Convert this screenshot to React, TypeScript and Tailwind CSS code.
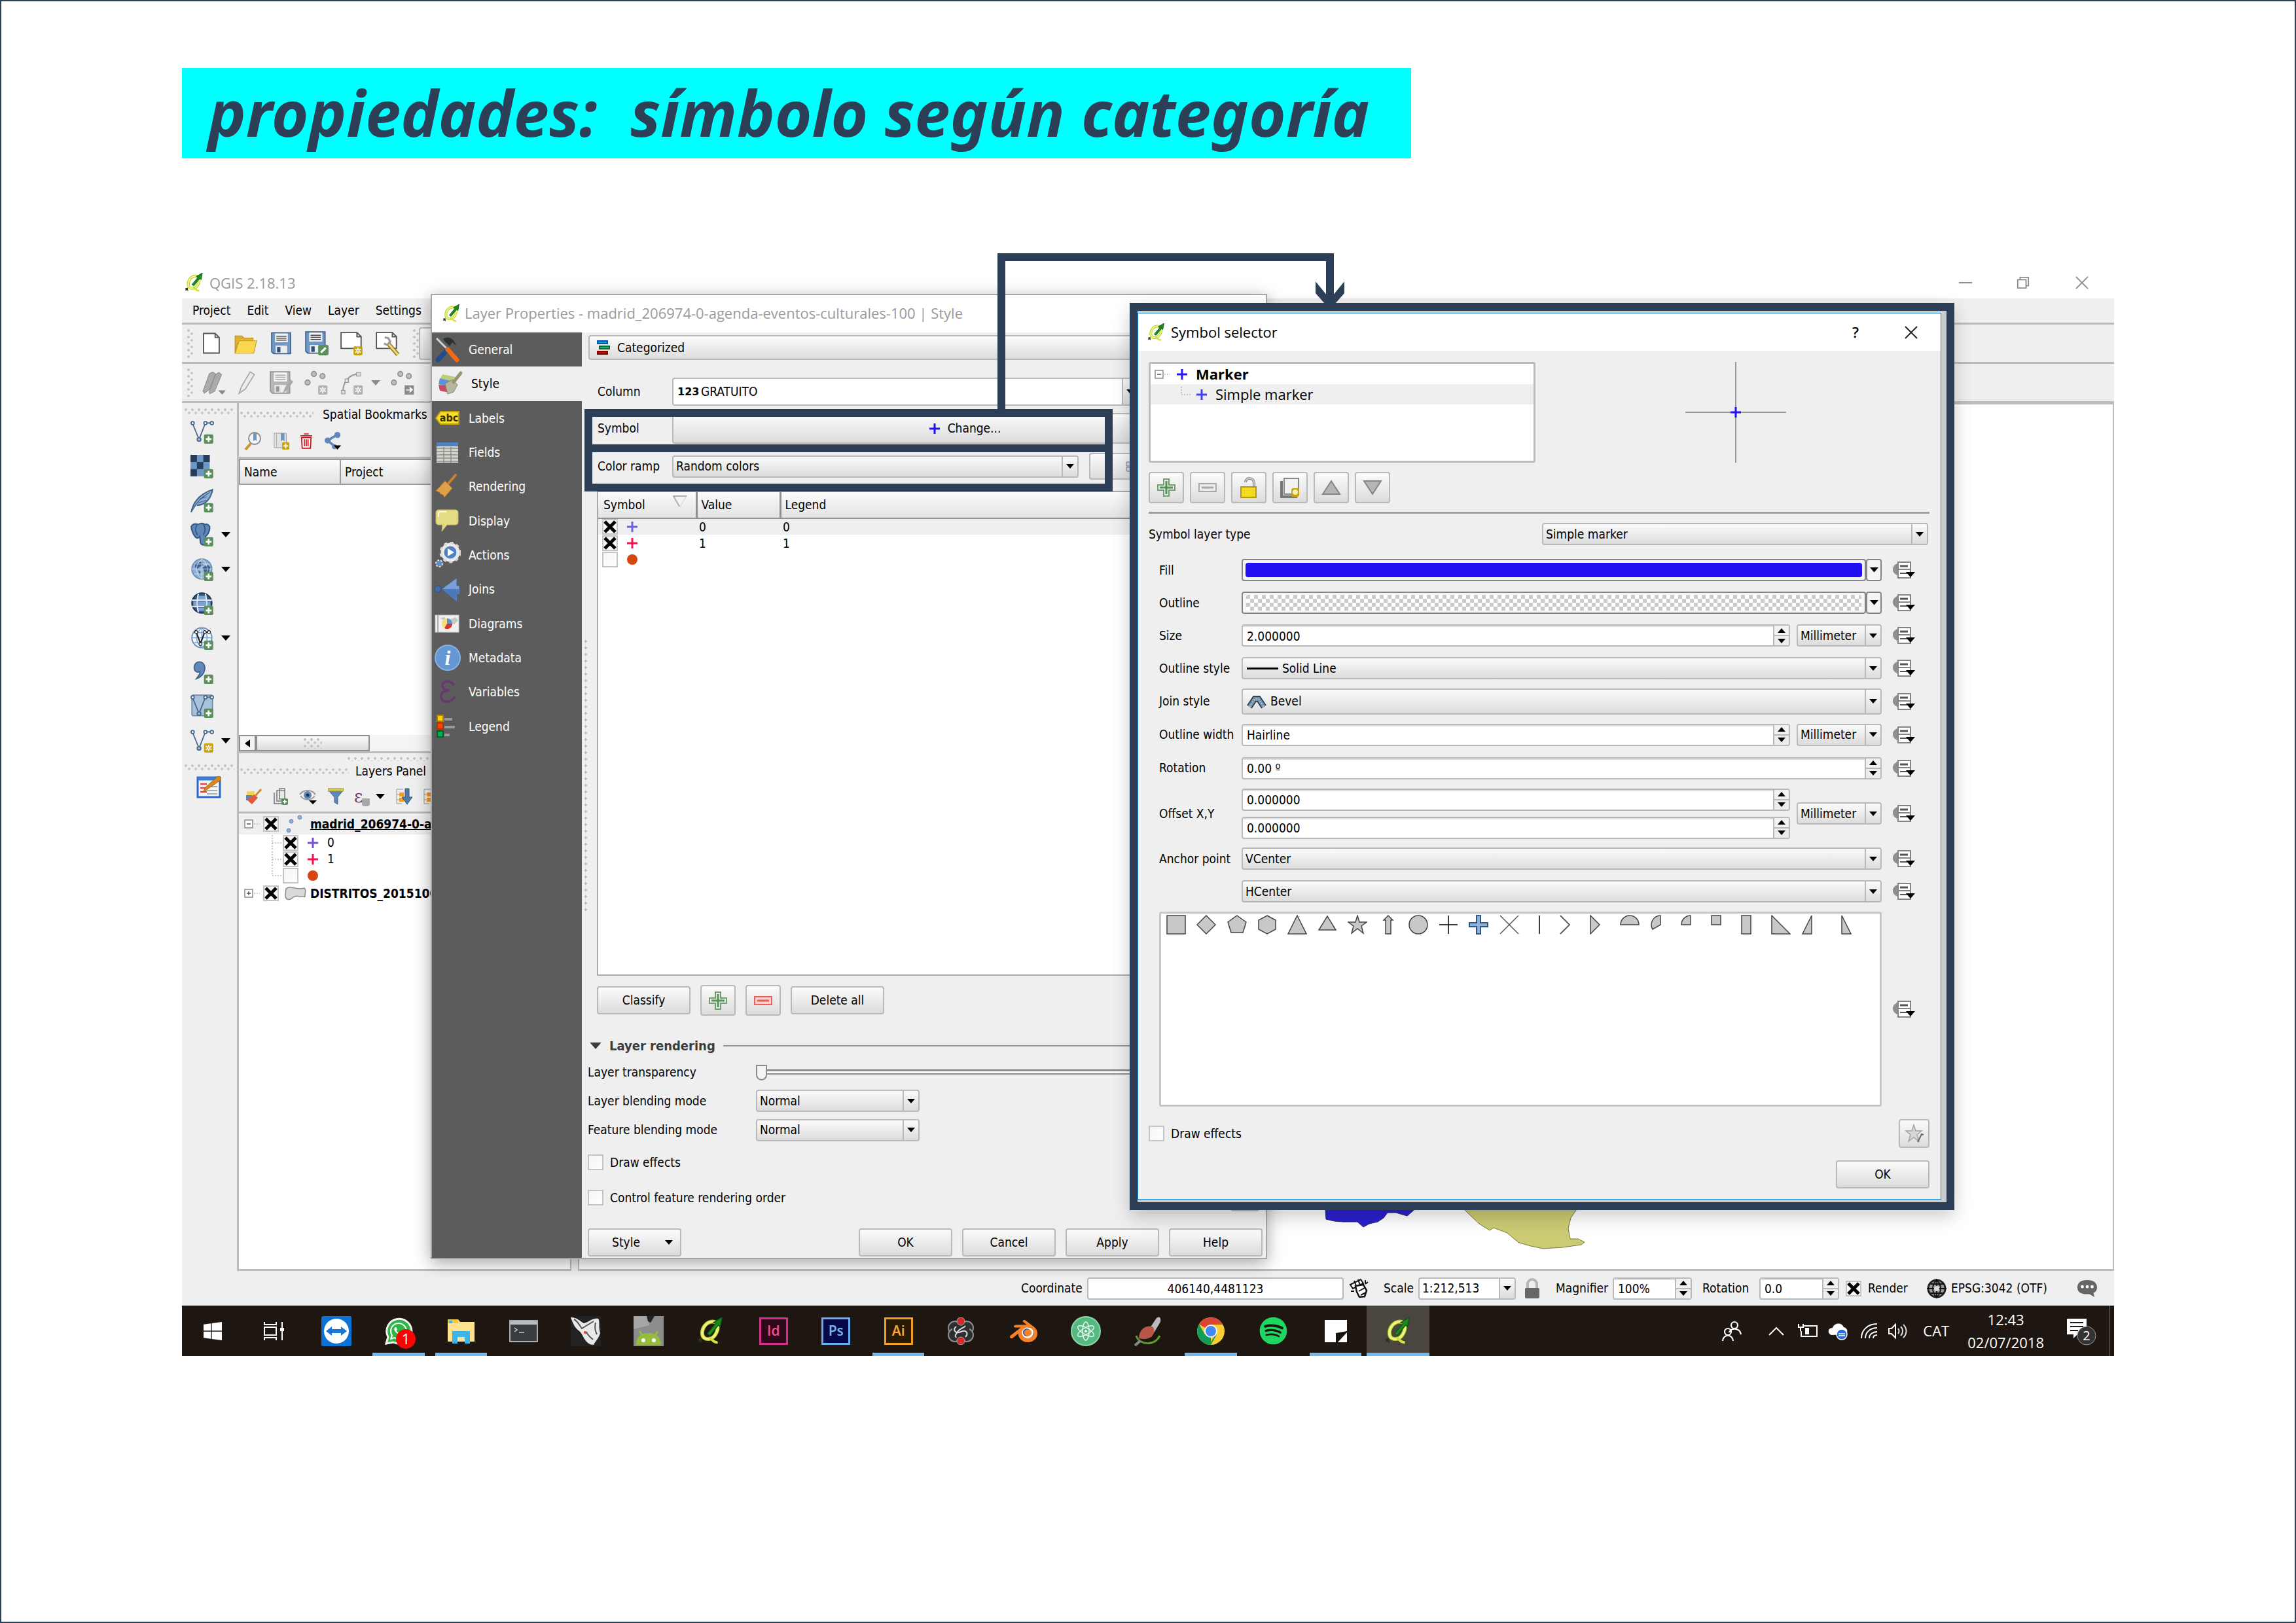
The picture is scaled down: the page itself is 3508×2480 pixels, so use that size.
import React from "react";
import { FaWhatsapp, FaSpotify, FaWindows } from "react-icons/fa";
import { SiBlender } from "react-icons/si";

type Kids = { children?: React.ReactNode; className?: string };

/* ---------- drawing helpers ---------- */

function Svg({ w, h, vb, children, className = "" }: Kids & { w: number; h: number; vb: string }) {
  return (
    <svg width={w} height={h} viewBox={vb} fill="none" className={`shrink-0 ${className}`} aria-hidden="true">
      {children}
    </svg>
  );
}

function QLogo({ size = 30 }: { size?: number }) {
  return (
    <Svg w={size} h={size} vb="0 0 32 32">
      <path d="M18 5C11 5 6 12 6 18s4 8 9 7 9-8 9-13-2-7-6-7Z" stroke="#b5c428" strokeWidth="4.500" />
      <path d="M18 5C11 5 6 12 6 18s4 8 9 7 9-8 9-13-2-7-6-7Z" stroke="#eaf57a" strokeWidth="2.800" />
      <path d="M14 24c4 0 4 6 10 5" stroke="#d3e03c" strokeWidth="3" />
      <path d="M12 19 22 7l-3-1 10-6-2 11-2-2-10 12Z" fill="#1c8a1c" stroke="#0c5a12" strokeWidth="1" />
      <path d="M1 25l4-1 1 6-2-2-3 1 1-2Z" fill="#1c3c1c" />
    </Svg>
  );
}

const PlusBadge = () => (
  <g>
    <rect x="19" y="20" width="13" height="13" rx="2" fill="#5a8f5c" />
    <path d="M25.500 22.500v8M21.500 26.500h8" stroke="#fff" strokeWidth="2.500" />
  </g>
);
const StarBadge = ({ c = "#c9a40d" }: { c?: string }) => (
  <g>
    <rect x="19" y="20" width="13" height="13" rx="2" fill={c} />
    <path d="M25.500 22v9M21.500 24l8 5M29.500 24l-8 5" stroke="#fff" strokeWidth="1.600" />
    <circle cx="25.500" cy="26.500" r="2" fill="#fff" />
    <circle cx="25.500" cy="26.500" r="1" fill={c} />
  </g>
);
const VLine = ({ c = "#46658a" }: { c?: string }) => (
  <g stroke={c} strokeWidth="1.600">
    <path d="M3 5 12 27 21 4h8" />
    <circle cx="3" cy="4" r="2.200" fill="#fff" />
    <circle cx="12" cy="27" r="2.600" fill="#9db9d9" />
    <circle cx="21" cy="4" r="2.200" fill="#fff" />
    <circle cx="30" cy="4" r="2.200" fill="#fff" />
  </g>
);

function Caret({ w = 14, color = "#000", up = false }: { w?: number; color?: string; up?: boolean }) {
  return (
    <Svg w={w} h={w / 2 + 1} vb="0 0 14 8">
      <path d={up ? "M0 8h14L7 0Z" : "M0 0h14L7 8Z"} fill={color} />
    </Svg>
  );
}

function Plus({ color, size = 16 }: { color: string; size?: number }) {
  return (
    <Svg w={size} h={size} vb="0 0 16 16">
      <path d="M8 0v16M0 8h16" stroke={color} strokeWidth="3" />
    </Svg>
  );
}
const Dot = () => <span className="size-4 shrink-0 rounded-full bg-[#d4480f]" />;

const Grip = ({ className = "" }: Kids) => (
  <span
    className={`bg-[radial-gradient(circle_at_2px_2px,#c2c2c2_2px,transparent_2px),radial-gradient(circle_at_7px_7px,#c8c8c8_2px,transparent_2px)] bg-[length:10px_10px] ${className}`}
  />
);

/* ---------- controls ---------- */

const gray = "border-2 border-[#b9b9b9] rounded-[4px] bg-linear-to-b from-[#fbfbfb] to-[#dcdcdc]";

function Btn({ children, className = "", label }: Kids & { label?: string }) {
  return (
    <button aria-label={label} className={`${gray} flex shrink-0 items-center justify-center ${className}`}>
      {children}
    </button>
  );
}

function Combo({ value, icon, pad = "pl-1", label, white = false, className = "", id }: { value: string; icon?: React.ReactNode; pad?: string; label: string; white?: boolean; className?: string; id?: string }) {
  return (
    <div className={`relative flex ${className}`}>
      <select
        id={id}
        aria-label={label}
        className={`w-full appearance-none rounded-[4px] border-2 border-[#b9b9b9] ${pad} ${white ? "bg-white" : "bg-linear-to-b from-[#fbfbfb] to-[#dcdcdc]"}`}
      >
        <option>{value}</option>
      </select>
      {icon && <span className="pointer-events-none absolute inset-y-0 left-2 flex items-center">{icon}</span>}
      <span className="pointer-events-none absolute inset-y-[2px] right-[2px] flex w-6 items-center justify-center rounded-r-[3px] border-l-2 border-[#b9b9b9] bg-linear-to-b from-[#fbfbfb] to-[#dcdcdc]">
        <Caret w={12} />
      </span>
    </div>
  );
}

function Spin({ value, label, className = "", id }: { value: string; label: string; className?: string; id?: string }) {
  return (
    <div className={`flex h-[34px] overflow-hidden rounded-[4px] border-2 border-[#b9b9b9] bg-white ${className}`}>
      <input id={id} aria-label={label} defaultValue={value} className="w-full min-w-0 border-t-2 border-[#dedede] pl-[6px] outline-none" />
      <span className="flex w-6 shrink-0 flex-col border-l-2 border-[#b9b9b9]">
        <button aria-label={`${label} up`} className="flex flex-1 items-center justify-center border-b-2 border-[#b9b9b9] bg-[#f2f2f2]">
          <Caret w={12} up />
        </button>
        <button aria-label={`${label} down`} className="flex flex-1 items-center justify-center bg-[#ececec]">
          <Caret w={12} />
        </button>
      </span>
    </div>
  );
}

function Check({ checked = false, label, id }: { checked?: boolean; label?: string; id?: string }) {
  return (
    <span className="relative flex size-6 shrink-0">
      <input
        type="checkbox"
        id={id}
        aria-label={label}
        defaultChecked={checked}
        className="peer size-6 appearance-none border-2 border-[#c4c4c4] bg-linear-to-br from-[#f4f4f4] to-white"
      />
      <svg viewBox="0 0 24 24" className="pointer-events-none absolute inset-0 hidden peer-checked:block" aria-hidden="true">
        <path d="M4 4 20 20M20 4 4 20" stroke="#000" strokeWidth="5" />
      </svg>
    </span>
  );
}

/* ---------- main window ---------- */

const PageShape = <path d="M4 2h17l6 6v23H4Z M21 2v6h6" fill="#fff" stroke="#555" strokeWidth="1.800" />;
const Floppy = ({ g = false }: { g?: boolean }) => (
  <g>
    <path d="M2 1h28v31H5l-3-3Z" fill={g ? "#b5b5b5" : "#6f97c6"} stroke={g ? "#949494" : "#3c5c85"} strokeWidth="1.600" />
    <rect x="7" y="2" width="19" height="13" fill="#f4f4f4" />
    <path d="M9 6h15M9 9h15M9 12h15" stroke={g ? "#aaa" : "#444"} strokeWidth="1.500" />
    <rect x="8" y="20" width="17" height="11" fill="#eee" />
    <rect x="10" y="22" width="5" height="8" fill={g ? "#999" : "#2f4f7a"} />
  </g>
);
const Dots3 = () => (
  <g fill="#bdbdbd" stroke="#8f8f8f" strokeWidth="1.500">
    <circle cx="13" cy="4" r="3.500" />
    <circle cx="25" cy="7" r="3.500" />
    <circle cx="4" cy="16" r="3.500" />
  </g>
);

function MainToolbars() {
  return (
    <>
      <div className="flex h-[60px] items-center border-b-[3px] border-[#bcbcbc] pl-2">
        <Grip className="h-11 w-[9px]" />
        <div className="ml-[14px] flex items-center">
          <Svg w={28} h={36} vb="2 0 27 34">{PageShape}</Svg>
          <Svg w={36} h={36} vb="0 0 34 34" className="ml-5">
            <path d="M2 6h10l3 3h13v8H5L2 31Z" fill="#e0b32f" stroke="#b98e1b" />
            <path d="M8 13h25l-4 18H2Z" fill="#fcd84f" stroke="#c79a1f" />
          </Svg>
          <Svg w={34} h={36} vb="0 0 33 34" className="ml-5"><Floppy /></Svg>
          <Svg w={38} h={38} vb="0 0 36 36" className="ml-[18px]">
            <Floppy />
            <rect x="20" y="20" width="15" height="15" rx="2" fill="#5a8f5c" />
            <path d="m24 31 7-7" stroke="#fff" strokeWidth="3" />
          </Svg>
          <Svg w={38} h={38} vb="0 -1 36 36" className="ml-4">
            <path d="M2 1h23l6 6v17H2Z M25 1v6h6" fill="#fff" stroke="#555" strokeWidth="1.800" />
            <g transform="translate(1 1)"><StarBadge /></g>
          </Svg>
          <Svg w={38} h={38} vb="0 -1 36 36" className="ml-4">
            <path d="M2 1h23l6 6v17H2Z M25 1v6h6" fill="#fff" stroke="#555" strokeWidth="1.800" />
            <path d="M14 8l5 1 3 5-4 5-5-2" stroke="#999" strokeWidth="3" />
            <path d="m20 18 13 15" stroke="#9a7a2a" strokeWidth="6" />
            <path d="m20 18 13 15" stroke="#f0d77a" strokeWidth="3" />
          </Svg>
        </div>
        <Grip className="ml-5 h-11 w-[9px]" />
        <Btn className="h-[50px] w-[60px] border-[#8a8a8a]" label="Pan map" />
      </div>
      <div className="flex h-[60px] items-center border-b-[3px] border-[#bcbcbc] pl-2">
        <Grip className="h-11 w-[9px]" />
        <Svg w={40} h={38} vb="0 0 38 36" className="ml-3">
          <path d="M3 30 12 5l5-3 4 3-8 22-8 6ZM12 31l9-25 5-3 4 3-10 24-7 4Z" fill="#ababab" stroke="#8b8b8b" />
          <path d="M25 29h11l-5 6Z" fill="#888" />
        </Svg>
        <Svg w={28} h={38} vb="0 0 26 36" className="ml-4">
          <path d="M2 33 5 24 18 2l6 4L11 27Z" fill="#ececec" stroke="#a5a5a5" strokeWidth="1.600" />
        </Svg>
        <Svg w={38} h={36} vb="0 0 36 34" className="ml-5">
          <Floppy g />
          <path d="m20 32 3-8 8-12 4 3-8 12Z" fill="#aaa" />
        </Svg>
        <Svg w={38} h={38} vb="0 -1 34 35" className="ml-4"><Dots3 /><StarBadge c="#b3b3b3" /></Svg>
        <Svg w={38} h={38} vb="0 -1 34 35" className="ml-4">
          <path d="M4 30C4 16 12 4 27 4" stroke="#9b9b9b" strokeWidth="2" />
          <g fill="#ddd" stroke="#999"><rect x="2" y="27" width="5" height="5" /><rect x="7" y="11" width="5" height="5" /><rect x="23" y="2" width="6" height="5" /></g>
          <StarBadge c="#b3b3b3" />
        </Svg>
        <span className="ml-[10px]"><Caret color="#8a8a8a" w={14} /></span>
        <Svg w={38} h={38} vb="0 -1 34 35" className="ml-4">
          <Dots3 />
          <rect x="19" y="20" width="13" height="13" fill="#8a8a8a" />
          <path d="M21 26h5v-4l5 4-5 5v-4h-5Z" fill="#fff" />
        </Svg>
      </div>
    </>
  );
}

const Globe = ({ dark = false, light = false }: { dark?: boolean; light?: boolean }) => (
  <g>
    <circle cx="16" cy="16" r="14" fill={light ? "#f4f8fc" : dark ? "#35557d" : "#8db0d8"} stroke={dark ? "#1f3350" : "#6f8fb5"} strokeWidth="1.800" />
    {dark && <path d="M10 6h12v5H10Zm-6 8h6v6H4Zm18 0h6v6h-6Zm-11 0h10v6H11Zm-1 9h12v4H10Z" fill="#7ba2d0" />}
    {!dark && !light && <path d="M7 8l8-2 3 4-5 3-4 3-3-3Zm10 6 7-4 4 4-3 7-4 3-2-6Zm-6 4 3 2-1 5Z" fill="#3d5f8c" />}
    <path d={dark ? "M2 12h28M2 21h28M11 3c-2 8-2 18 0 26M21 3c2 8 2 18 0 26" : "M2 16h28M16 2v28M5 9h22M5 23h22M16 2c-10 8-10 20 0 28M16 2c10 8 10 20 0 28"} stroke={light ? "#7fa3cf" : "#dce8f5"} strokeWidth={light ? 1.4 : dark ? 2 : 0.8} />
  </g>
);

const sideTools: { name: string; arrow?: boolean; art: React.ReactNode }[] = [
  { name: "Add vector layer", art: <><VLine /><PlusBadge /></> },
  { name: "Add raster layer", art: <><path d="M0 0h27v30H0Z" fill="#6f97c6" /><path d="M0 0h9v10H0ZM18 0h9v10h-9ZM9 10h9v10H9ZM0 20h9v10H0Z" fill="#263e5c" /><PlusBadge /></> },
  { name: "Add SpatiaLite layer", art: <><path d="M1 33C3 22 10 8 31 1c-2 12-10 22-22 22" fill="#8fb0d6" stroke="#3d5d88" strokeWidth="1.800" /><path d="M2 31C8 19 15 12 27 5M10 20l12-4M13 14l10-3" stroke="#3d5d88" /><PlusBadge /></> },
  { name: "Add PostGIS layer", arrow: true, art: <><path d="M1 5c3-5 7-4 10-3 3-2 7-2 9 0 4-1 7 1 7 5 0 5-3 10-6 12v11c-3 2-6 1-7-2l-1-9c-2 3-4 3-6 1C4 17 1 10 1 5Z" fill="#5f87b8" stroke="#34547d" strokeWidth="1.800" /><path d="M9 3c-3 5-2 10 1 14M18 2c4 5 3 10 0 15" stroke="#34547d" strokeWidth="1.500" /><PlusBadge /></> },
  { name: "Add WMS layer", arrow: true, art: <><Globe /><PlusBadge /></> },
  { name: "Add WCS layer", art: <><Globe dark /><PlusBadge /></> },
  { name: "Add WFS layer", arrow: true, art: <><Globe light /><path d="M8 8 14 24 20 8h6" stroke="#222" strokeWidth="2" /><g fill="#fff" stroke="#222"><circle cx="8" cy="8" r="2" /><circle cx="14" cy="25" r="2" /><circle cx="20" cy="8" r="2" /><circle cx="26" cy="8" r="2" /></g><PlusBadge /></> },
  { name: "Add delimited text layer", art: <><path d="M12 2c6 0 9 5 8 11-1 7-6 11-12 13 3-4 6-7 5-10-5 2-8-2-8-6s3-8 7-8Z" fill="#5f87b8" stroke="#3b5c86" strokeWidth="1.500" /><PlusBadge /></> },
  { name: "New shapefile layer", art: <><rect x="2" y="1" width="29" height="29" rx="2" fill="#a9c1dc" stroke="#7288a3" strokeWidth="1.600" /><VLine /><PlusBadge /></> },
  { name: "New memory layer", arrow: true, art: <><VLine /><StarBadge /></> },
];

function SideTools() {
  return (
    <div className="flex w-[87px] shrink-0 flex-col border-r-[3px] border-[#bcbcbc] pt-2">
      <Grip className="mx-1 h-[10px]" />
      <div className="flex h-[524px] flex-col">
        {sideTools.map((t) => (
          <div key={t.name} className="flex flex-1 items-center pl-3">
            <button aria-label={t.name}>
              <Svg w={38} h={38} vb="-1 -1 35 35">{t.art}</Svg>
            </button>
            {t.arrow && <span className="ml-[10px]"><Caret w={14} /></span>}
          </div>
        ))}
      </div>
      <Grip className="mx-1 mt-[10px] h-[10px]" />
      <button aria-label="Edit style" className="mt-[6px] ml-[22px] w-fit">
        <Svg w={40} h={36} vb="0 0 40 36">
          <rect x="2" y="4" width="34" height="30" fill="#f5f5f5" stroke="#2c68c4" strokeWidth="3" />
          <path d="M3 6h32" stroke="#3a7ad9" strokeWidth="5" />
          <path d="M6 14h10M6 20h8M6 26h10" stroke="#e44" strokeWidth="2.500" />
          <path d="M18 18h14M16 24h16M16 29h16" stroke="#aaa" strokeWidth="2" />
          <path d="m10 27 4-8L32 3c3-2 7 1 5 5L18 21Z" fill="#d98a1e" stroke="#a8640c" />
        </Svg>
      </button>
    </div>
  );
}

function BookmarksPanel() {
  return (
    <section className="flex flex-col">
      <div className="flex h-[34px] items-center">
        <Grip className="ml-[2px] h-[9px] w-[112px]" />
        <h2 className="ml-[14px] whitespace-nowrap">Spatial Bookmarks Panel</h2>
      </div>
      <div className="flex h-[51px] items-center border-b-[3px] border-[#bcbcbc] pl-2">
        <Svg w={28} h={32} vb="0 0 28 32">
          <circle cx="16" cy="12" r="9" fill="#f1f5f9" stroke="#888" strokeWidth="1.800" />
          <path d="M14 3h5v13l-2-2-3 2Z" fill="#6f97c6" />
          <path d="m10 20-8 9" stroke="#c79a1f" strokeWidth="4" />
        </Svg>
        <Svg w={26} h={32} vb="0 0 28 32" className="ml-4">
          <path d="M2 3h20v24H2Z" fill="#e2e2e2" stroke="#999" />
          <path d="M13 3h6v13l-3-2-3 2Z" fill="#6f97c6" />
          <path d="M6 3v24" stroke="#aaa" />
          <rect x="15" y="18" width="12" height="12" rx="2" fill="#c9a40d" />
          <path d="M21 20v8M17 24h8" stroke="#fff" strokeWidth="2" />
        </Svg>
        <Svg w={18} h={28} vb="0 0 20 28" className="ml-4">
          <path d="M2 8h16l-1 18H3Z" fill="#fff" stroke="#c8141c" strokeWidth="2" />
          <path d="M0 5h20M6 2h8M7 11v12M10 11v12M13 11v12" stroke="#d9202a" strokeWidth="2" />
        </Svg>
        <Svg w={28} h={28} vb="0 0 30 30" className="ml-[18px]">
          <path d="M21 5 6 14l12 10" stroke="#5f87b8" strokeWidth="4" />
          <circle cx="22" cy="5" r="5" fill="#5f87b8" />
          <circle cx="6" cy="14" r="5" fill="#5f87b8" />
          <circle cx="17" cy="24" r="4" fill="#5f87b8" />
          <path d="M16 22h12l-6 7Z" fill="#000" />
        </Svg>
      </div>
      <div className="h-[422px] bg-white">
        <table className="w-full table-fixed border-collapse">
          <thead>
            <tr className="h-[38px] bg-linear-to-b from-[#fbfbfb] to-[#e2e2e2] text-left">
              <th className="w-[154px] border-2 border-[#9a9a9a] pl-[6px] font-normal">Name</th>
              <th className="border-2 border-[#9a9a9a] pl-[6px] font-normal">Project</th>
            </tr>
          </thead>
        </table>
      </div>
      <div className="flex h-7 border-b-[3px] border-[#bcbcbc] bg-[#f4f4f4]">
        <button aria-label="Scroll left" className="flex w-[26px] items-center justify-center border-2 border-[#8f8f8f] bg-[#f4f4f4]">
          <Svg w={8} h={12} vb="0 0 8 12"><path d="M8 0v12L0 6Z" fill="#000" /></Svg>
        </button>
        <div className="flex w-[174px] items-center justify-center border-2 border-[#8f8f8f] bg-linear-to-b from-[#fbfbfb] to-[#dcdcdc]">
          <Grip className="h-4 w-7" />
        </div>
      </div>
    </section>
  );
}

function Expander({ open }: { open: boolean }) {
  return (
    <Svg w={24} h={14} vb="0 0 24 14">
      <rect x="1" y="1" width="12" height="12" fill="#fff" stroke="#8a8a8a" strokeWidth="1.500" />
      <path d={open ? "M4 7h6" : "M4 7h6M7 4v6"} stroke="#555" strokeWidth="1.500" />
      <path d="M15 7h9" stroke="#999" strokeDasharray="2 2" />
    </Svg>
  );
}
const Branch = ({ last = false }: { last?: boolean }) => (
  <Svg w={16} h={24} vb="0 0 16 24">
    <path d={last ? "M1 0v12h15" : "M1 0v24M1 12h15"} stroke="#999" strokeDasharray="2 2" />
  </Svg>
);

function LayersPanel() {
  return (
    <section className="flex flex-1 flex-col">
      <Grip className="mt-[6px] ml-[166px] h-[6px]" />
      <div className="flex h-[30px] items-center">
        <Grip className="ml-[2px] h-[9px] w-[166px]" />
        <h2 className="ml-[10px]">Layers Panel</h2>
      </div>
      <div className="flex h-[50px] items-center border-b-[3px] border-[#bcbcbc] pl-[10px]">
        <Svg w={26} h={26} vb="0 0 26 26">
          <path d="M2 5h12v9H2Z" fill="#f2d64f" /><path d="M1 11h9v8H1Z" fill="#5f87b8" />
          <path d="M2 18l11-8 6 5-9 10Z" fill="#de5b3f" /><path d="m15 12 9-10" stroke="#c98a3a" strokeWidth="3" />
        </Svg>
        <Svg w={24} h={28} vb="0 0 24 28" className="ml-4">
          <path d="M2 8v17h14M6 5v16h12V5ZM10 2v16h8V2Z" fill="#e8e8e8" stroke="#777" strokeWidth="1.500" />
          <rect x="13" y="17" width="10" height="10" rx="2" fill="#5a8f5c" /><path d="M18 19v6M15 22h6" stroke="#fff" strokeWidth="2" />
        </Svg>
        <Svg w={28} h={26} vb="0 0 28 26" className="ml-4">
          <path d="M1 10C7 2 19 2 25 10M2 12c6 8 16 8 22 0" stroke="#999" strokeWidth="2" />
          <circle cx="13" cy="11" r="6" fill="#5f87b8" /><circle cx="13" cy="11" r="2.500" fill="#1d2f49" />
          <path d="M15 19h12l-6 6Z" fill="#000" />
        </Svg>
        <Svg w={24} h={26} vb="0 0 24 26" className="ml-4">
          <path d="M1 4h22l-8 10v11l-5-3v-8Z" fill="#5f87b8" stroke="#46658a" /><path d="M0 1h24v4H0Z" fill="#d9cf52" stroke="#8f8830" />
        </Svg>
        <span className="relative ml-4 text-[26px] leading-none text-[#6a4373] [font-family:'DejaVu_Serif',serif]">
          ε
          <span className="absolute top-4 left-[12px] h-[12px] w-3 rounded-b-sm bg-[#a8a8a8]" />
        </span>
        <span className="ml-5"><Caret w={14} /></span>
        <Svg w={26} h={26} vb="0 0 26 26" className="ml-4">
          <path d="M2 2h10M2 2v22h8M2 10h5M2 18h5" stroke="#999" /><path d="M6 7h7v6H6ZM6 15h7v6H6Z" fill="#f39a1e" />
          <path d="M15 1h6v13h5l-8 11-8-11h5Z" fill="#5279ad" stroke="#34547d" />
        </Svg>
        <Svg w={26} h={26} vb="0 0 26 26" className="ml-4">
          <path d="M2 2h10M2 2v22h8M2 10h5M2 18h5" stroke="#999" /><path d="M6 7h7v6H6ZM6 15h7v6H6Z" fill="#f39a1e" />
        </Svg>
      </div>
      <div className="flex flex-1 flex-col border-r-2 border-b-[3px] border-[#bcbcbc] bg-white">
        <div className="flex h-8 items-center bg-[#efefef] pl-2">
          <Expander open />
          <span className="ml-[5px]"><Check checked label="madrid layer visible" /></span>
          <Svg w={28} h={28} vb="0 0 28 28" className="mx-[10px]">
            <g fill="#8fb0d6" stroke="#5f87b8"><circle cx="5" cy="24" r="3" /><circle cx="9" cy="10" r="3" /><circle cx="22" cy="4" r="3" /></g>
          </Svg>
          <span className="font-bold whitespace-nowrap underline">madrid_206974-0-agenda</span>
        </div>
        {["0", "1", ""].map((v, i) => (
          <div key={i} className="flex h-[25px] items-center pl-[50px]">
            <Branch last={i === 2} />
            <span className="ml-[1px]"><Check checked={i < 2} label={`category ${v}`} /></span>
            <span className="mx-[14px] flex">{i === 2 ? <Dot /> : <Plus color={i ? "#f5124f" : "#7a52d6"} />}</span>
            {v}
          </div>
        ))}
        <div className="flex h-[30px] items-center pl-2">
          <Expander open={false} />
          <span className="ml-[5px]"><Check checked label="DISTRITOS layer visible" /></span>
          <Svg w={34} h={24} vb="0 0 34 24" className="ml-2">
            <path d="M3 5c8-6 14 3 28-1 4 4 0 8 1 13-8 2-12-4-18 1-6 6-12 4-12-3Z" fill="#d9d9d9" stroke="#8a8a8a" strokeWidth="1.500" />
          </Svg>
          <span className="ml-[6px] font-bold whitespace-nowrap">DISTRITOS_20151002</span>
        </div>
      </div>
    </section>
  );
}

function StatusBar() {
  return (
    <footer className="flex h-[53px] items-center justify-end pr-6">
      <label htmlFor="coord" className="w-[95px]">Coordinate</label>
      <input id="coord" defaultValue="406140,4481123" className="ml-[6px] h-[34px] w-[392px] rounded-[4px] border-2 border-[#b9b9b9] bg-white text-center" />
      <Svg w={30} h={32} vb="0 0 30 32" className="mr-[23px] ml-2">
        <path d="M2 10 18 2l4 6L6 16ZM8 4l4 10M14 2l3 9" fill="#fff" stroke="#111" strokeWidth="2" />
        <path d="M10 12l12-2 5 9-3 9-8 1-4-8Z" fill="#fff" stroke="#111" strokeWidth="2.500" />
        <path d="M3 20h5M25 3v5M29 6l-4 3M15 20l9-5M18 26l8-4" stroke="#111" strokeWidth="2" />
      </Svg>
      <label htmlFor="scale" className="w-[47px]">Scale</label>
      <Combo id="scale" label="Scale" value="1:212,513" white className="ml-[6px] h-[34px] w-[149px]" />
      <Svg w={26} h={32} vb="0 0 26 32" className="mr-[23px] ml-3">
        <path d="M6 16V9a7 7 0 0 1 14 0v7" stroke="#b5b5b5" strokeWidth="4" /><rect x="2" y="15" width="22" height="16" rx="2" fill="#666" />
      </Svg>
      <label htmlFor="mag" className="w-[81px]">Magnifier</label>
      <Spin id="mag" label="Magnifier" value="100%" className="ml-[6px] w-[121px]" />
      <label htmlFor="rot" className="ml-4 w-[71px]">Rotation</label>
      <Spin id="rot" label="Map rotation" value="0.0" className="mr-[10px] ml-4 w-[122px]" />
      <Check checked id="render" />
      <label htmlFor="render" className="ml-[10px] w-[61px]">Render</label>
      <Svg w={32} h={32} vb="0 0 32 32" className="mr-[6px] ml-7">
        <circle cx="16" cy="16" r="13" fill="#999" stroke="#222" strokeWidth="3" />
        <path d="M1 16h30M16 1v30M16 3c-8 7-8 19 0 26M16 3c8 7 8 19 0 26M6 9h20M6 23h20" stroke="#111" strokeWidth="1.800" />
        <circle cx="16" cy="16" r="4" fill="#ddd" />
      </Svg>
      <button className="w-[157px] text-left">EPSG:3042 (OTF)</button>
      <button aria-label="Messages" className="ml-[34px]">
        <Svg w={34} h={30} vb="0 0 36 32">
          <path d="M18 2c10 0 16 4 16 12 0 5-3 8-6 9l2 7-8-5H18C8 25 2 22 2 14S8 2 18 2Z" fill="#666" />
          <g fill="#fff"><circle cx="10" cy="13" r="2.500" /><circle cx="18" cy="13" r="2.500" /><circle cx="26" cy="13" r="2.500" /></g>
        </Svg>
      </button>
    </footer>
  );
}

/* ---------- layer properties ---------- */

const tabs: { name: string; art: React.ReactNode }[] = [
  { name: "General", art: <><path d="M3 3 20 20" stroke="#c9d4da" strokeWidth="3" /><path d="M13 4c7-5 16-2 20 10l-6-5-4 6-8-8Z" fill="#2c3030" /><path d="m5 36 15-16" stroke="#244b8c" strokeWidth="7" strokeLinecap="round" /><path d="m20 20 14 16" stroke="#f26a12" strokeWidth="7" strokeLinecap="round" /></> },
  { name: "Style", art: <><path d="m8 6 20 4-6 8-18-4Z" fill="#b9cf7a" /><path d="m4 12 16 4-2 10-16-5Z" fill="#5d93d8" /><path d="m2 22 18 2-2 10-14-3Z" fill="#c84a66" /><path d="m12 20 12-6 7 8-6 11-9 3Z" fill="#b6b79e" stroke="#86876c" /><path d="m25 18 11-14" stroke="#9a9270" strokeWidth="5" strokeLinecap="round" /></> },
  { name: "Labels", art: <path d="M2 20 9 10h28v19H9Z" fill="#f7df2a" stroke="#c29f0c" strokeWidth="2" /> },
  { name: "Fields", art: <><rect x="3" y="5" width="33" height="31" fill="#d3d6cd" /><path d="M3 5h33v6H3Z" fill="#4f82c2" /><path d="M3 14h33M3 19h33M3 24h33M3 29h33M3 34h33M14 12v24M25 12v24" stroke="#8d9088" strokeWidth="1.500" /></> },
  { name: "Rendering", art: <><path d="m20 17 12-14" stroke="#c98224" strokeWidth="4" strokeLinecap="round" /><path d="M16 12 27 23 15 37c-1-4-4-5-6-5-1-4-5-4-7-5Z" fill="#dfa04a" stroke="#b97a24" /></> },
  { name: "Display", art: <><path d="M7 3h24c4 0 5 2 5 5v13c0 4-2 5-5 5H19l-8 10 1-10H7c-4 0-5-2-5-5V8c0-3 1-5 5-5Z" fill="#e6dc86" stroke="#c4b957" /><path d="M6 14V8c0-2 1-2 3-2h9" stroke="#fffbe0" strokeWidth="2" /></> },
  { name: "Actions", art: <><circle cx="24" cy="16" r="12" fill="#4f82c2" stroke="#e8e8e8" strokeWidth="5" /><circle cx="24" cy="16" r="15" stroke="#d6d6d6" strokeWidth="3" strokeDasharray="5 5" /><path d="M20 10v12l10-6Z" fill="#fff" /><circle cx="7" cy="33" r="5" fill="#5d8cc6" stroke="#ddd" strokeWidth="2" strokeDasharray="3 2" /></> },
  { name: "Joins", art: <><circle cx="5" cy="20" r="5" fill="#3f6ea8" stroke="#2a4d7c" /><path d="M11 20 34 3v12h4v12h-4v12Z" fill="#7aa0d8" stroke="#3b64a0" /><path d="M11 20h26v8h-4v9Z" fill="#4a78bb" /></> },
  { name: "Diagrams", art: <><rect x="1" y="7" width="36" height="26" fill="#f0f0ee" stroke="#ccc" /><path d="M5 7v26" stroke="#aaa" strokeWidth="2" /><path d="m8 12 7-2 5 5 12-5 4 5-6 6Z" fill="#c6c9c2" /><circle cx="19" cy="20" r="8" fill="#f4e07a" /><path d="M19 20v-8a8 8 0 0 1 8 8Z" fill="#5d93d8" /><path d="M19 20h8a8 8 0 0 1-12 7Z" fill="#d93030" /></> },
  { name: "Metadata", art: <circle cx="20" cy="20" r="19" fill="#6497d4" stroke="#87b1e3" strokeWidth="2" /> },
  { name: "Variables", art: <path d="M29 9C22 1 11 4 12 11c1 6 6 7 11 7-9 0-14 4-13 10 1 9 14 10 20 1" stroke="#67396f" strokeWidth="4" strokeLinecap="round" /> },
  { name: "Legend", art: <><path d="M4 3h9v9H4Z" fill="#ffd500" stroke="#b77b00" strokeWidth="2" /><path d="M4 15h9v9H4Z" fill="#ff4300" stroke="#b63000" strokeWidth="2" /><path d="M4 27h9v9H4Z" fill="#00b050" stroke="#00602c" strokeWidth="2" /><path d="M15 9h12M15 21h16M15 33h8" stroke="#999" strokeWidth="4" /></> },
];
const glyphs: Record<string, React.ReactNode> = {
  Labels: <span className="pointer-events-none absolute inset-0 flex items-center justify-center pl-1 text-[16px] font-bold text-[#3c3405]">abc</span>,
  Metadata: <span className="pointer-events-none absolute inset-0 flex items-center justify-center text-[32px] font-bold text-white italic [font-family:'Liberation_Serif',serif]">i</span>,
};

function Sidebar() {
  return (
    <nav className="w-[229px] shrink-0 bg-[#5c5c5c]">
      <div className="flex h-[628px] flex-col">
        {tabs.map((t) => (
          <button
            key={t.name}
            className={`flex flex-1 items-center ${t.name === "Style" ? "bg-[#efefef] pl-2 text-black" : "pl-1 text-white"}`}
          >
            <span className="relative mr-3 flex">
              <Svg w={40} h={40} vb="0 0 40 40">{t.art}</Svg>
              {glyphs[t.name]}
            </span>
            {t.name}
          </button>
        ))}
      </div>
    </nav>
  );
}

const CrossGreen = () => (
  <Svg w={30} h={30} vb="0 0 30 30">
    <path d="M11 2h8v9h9v8h-9v9h-8v-9H2v-8h9Z" fill="#e3f0e3" stroke="#6fa072" strokeWidth="2" />
    <path d="M15 5v20M5 15h20" stroke="#5a8f5c" strokeWidth="3" />
  </Svg>
);
const MinusBar = ({ c, f }: { c: string; f: string }) => (
  <Svg w={30} h={14} vb="0 0 30 14">
    <rect x="2" y="1" width="26" height="12" fill={f} stroke={c} strokeWidth="2" />
    <path d="M6 7h18" stroke={c} strokeWidth="3" />
  </Svg>
);

function LayerProperties() {
  return (
    <section
      aria-label="Layer Properties"
      className="absolute top-[38px] left-[380px] flex w-[1278px] flex-col border-2 border-[#a6a6a6] bg-[#efefef] shadow-[0_6px_24px_rgba(0,0,0,0.35)]"
    >
      <header className="flex h-[57px] items-center bg-white pb-[2px] pl-4 text-[22px] text-[#9a9a9a] [font-family:'Open_Sans','Noto_Sans',sans-serif]">
        <QLogo size={28} />
        <h2 className="ml-[6px]">Layer Properties - madrid_206974-0-agenda-eventos-culturales-100 | Style</h2>
      </header>
      <div className="flex">
        <Sidebar />
        <div className="relative flex-1">
          <Grip className="absolute top-[470px] left-1 h-[420px] w-[5px]" />
          <Combo
            label="Renderer"
            value="Categorized"
            pad="pl-[42px]"
            className="mt-1 mr-2 ml-[10px] h-[38px]"
            icon={
              <Svg w={26} h={24} vb="0 0 26 24" className="ml-1">
                <path d="M2 2h15v4H2Z" fill="#00a5c8" stroke="#0650b0" strokeWidth="2" />
                <path d="M5 10h15v4H5Z" fill="#18b86a" stroke="#0b6a3a" strokeWidth="2" />
                <path d="M2 18h15v4H2Z" fill="#c40f00" stroke="#7c0a00" strokeWidth="2" />
              </Svg>
            }
          />
          <div className="mt-[27px] flex h-[43px] items-center pl-6">
            <label htmlFor="column" className="w-[114px]">Column</label>
            <Combo
              id="column"
              label="Column"
              value="GRATUITO"
              white
              pad="pl-[42px]"
              className="h-full w-[713px]"
              icon={<span className="text-[16px] font-bold [font-family:'DejaVu_Sans',sans-serif]">123</span>}
            />
          </div>
          <div className="mt-[11px] flex h-[47px] items-center pr-3 pl-6">
            <label htmlFor="symbol" className="w-[114px]">Symbol</label>
            <button id="symbol" className={`${gray} flex h-full flex-1 items-center justify-center gap-3`}>
              <Plus color="#2210f0" />
              Change...
            </button>
          </div>
          <div className="mt-[14px] flex h-[41px] items-center pr-2 pl-6">
            <label htmlFor="ramp" className="w-[114px]">Color ramp</label>
            <Combo id="ramp" label="Color ramp" value="Random colors" className="h-[34px] w-[621px]" />
            <Btn label="Edit ramp" className="ml-4 h-full flex-1 justify-start border-[#9a9a9a] pl-[54px]">
              <Svg w={20} h={16} vb="0 0 20 16"><path d="M1 1h18v6H1ZM1 9h18v6H1Z" fill="#cfe0f2" stroke="#777" /></Svg>
            </Btn>
          </div>
          <div className="mt-[17px] mr-3 ml-[23px] h-[741px] border-2 border-[#a9a9a9] bg-white">
            <table className="w-full table-fixed border-collapse">
              <thead>
                <tr className="h-[40px] bg-linear-to-b from-[#fbfbfb] to-[#e2e2e2] text-left">
                  <th className="w-[150px] border-r-[3px] border-b-2 border-[#909090] pl-2 font-normal">
                    <span className="flex items-start justify-between pr-[13px]">
                      Symbol
                      <Svg w={22} h={18} vb="0 0 22 18"><path d="M1 1h20L11 17Z" fill="#f4f4f4" stroke="#dcdcdc" strokeWidth="1.500" /><path d="M0 1h21L11 17" stroke="#aaa" strokeWidth="0" /><path d="M0 1h21M1 1l9 16" stroke="#b0b0b0" strokeWidth="2" /></Svg>
                    </span>
                  </th>
                  <th className="w-[128px] border-r-[3px] border-b-2 border-[#909090] pl-[6px] font-normal">Value</th>
                  <th className="border-b-2 border-[#909090] pl-[6px] font-normal">Legend</th>
                </tr>
              </thead>
              <tbody>
                {["0", "1", ""].map((v, i) => (
                  <tr key={i} className={`h-[25px] leading-[24px] ${i === 0 ? "bg-[#efefef]" : ""}`}>
                    <td className="p-0 pl-[6px]">
                      <span className="flex items-center gap-[14px]">
                        <Check checked={i < 2} label={`row ${i}`} />
                        {i === 2 ? <Dot /> : <Plus color={i ? "#f5124f" : "#6a62e0"} />}
                      </span>
                    </td>
                    <td className="p-0 pl-1">{v}</td>
                    <td className="p-0 pl-1">{v}</td>
                  </tr>
                ))}
              </tbody>
            </table>
          </div>
          <div className="mt-[14px] flex h-[47px] items-center gap-[15px] pl-[23px]">
            <Btn className="h-[43px] w-[143px]">Classify</Btn>
            <Btn className="h-[47px] w-[54px]" label="Add"><CrossGreen /></Btn>
            <Btn className="h-[47px] w-[54px]" label="Remove"><MinusBar c="#e8605c" f="#fbd2d0" /></Btn>
            <Btn className="h-[43px] w-[143px]">Delete all</Btn>
          </div>
          <div className="mt-8 flex h-7 items-center pl-3 text-[20px] font-bold text-[#3c3c3c]">
            <Caret w={18} color="#3c3c3c" />
            <h3 className="ml-3">Layer rendering</h3>
            <span className="mr-3 ml-3 h-[2px] flex-1 bg-[#8f8f8f]" />
          </div>
          <div className="mt-1 flex h-11 items-center pr-3 pl-[9px]">
            <label htmlFor="transp" className="w-[257px]">Layer transparency</label>
            <input
              id="transp"
              type="range"
              defaultValue={0}
              className="h-6 flex-1 appearance-none bg-transparent [&::-webkit-slider-runnable-track]:h-[8px] [&::-webkit-slider-runnable-track]:border-t-[3px] [&::-webkit-slider-runnable-track]:border-b-2 [&::-webkit-slider-runnable-track]:border-[#8c8c8c] [&::-webkit-slider-runnable-track]:bg-white [&::-webkit-slider-thumb]:-mt-[10px] [&::-webkit-slider-thumb]:h-6 [&::-webkit-slider-thumb]:w-[17px] [&::-webkit-slider-thumb]:appearance-none [&::-webkit-slider-thumb]:rounded-t-[4px] [&::-webkit-slider-thumb]:rounded-b-full [&::-webkit-slider-thumb]:border-2 [&::-webkit-slider-thumb]:border-[#8c8c8c] [&::-webkit-slider-thumb]:bg-[#f4f4f4]"
            />
          </div>
          <div className="flex h-11 items-center pl-[9px]">
            <label htmlFor="lblend" className="w-[257px]">Layer blending mode</label>
            <Combo id="lblend" label="Layer blending mode" value="Normal" className="h-[34px] w-[250px]" />
          </div>
          <div className="flex h-[45px] items-center pl-[9px]">
            <label htmlFor="fblend" className="w-[257px]">Feature blending mode</label>
            <Combo id="fblend" label="Feature blending mode" value="Normal" className="h-[34px] w-[250px]" />
          </div>
          <div className="flex h-[54px] items-center gap-[10px] pl-[9px]">
            <Check id="deff" />
            <label htmlFor="deff">Draw effects</label>
          </div>
          <div className="flex h-[54px] items-center gap-[10px] pr-[10px] pl-[9px]">
            <Check id="cfro" />
            <label htmlFor="cfro">Control feature rendering order</label>
            <Btn className="ml-auto h-[42px] w-11 border-[#9a9a9a]" label="Order">
              <Svg w={28} h={24} vb="0 0 28 24"><path d="m2 22 6-18 4 18M4 15h7M20 2v18M15 15l5 6 5-6" stroke="#8a8a8a" strokeWidth="3" /></Svg>
            </Btn>
          </div>
          <div className="mt-5 flex items-center gap-[15px] pr-[5px] pb-[2px] pl-[9px]">
            <Btn className="mr-auto h-[43px] w-[143px] gap-[38px] pl-6">Style <Caret w={12} /></Btn>
            <Btn className="h-[43px] w-[143px] border-[#7a7a7a]">OK</Btn>
            <Btn className="h-[43px] w-[143px]">Cancel</Btn>
            <Btn className="h-[43px] w-[143px]">Apply</Btn>
            <Btn className="h-[43px] w-[143px]">Help</Btn>
          </div>
          <div className="pointer-events-none absolute top-[117px] left-[4px] h-[66px] w-[807px] border-12 border-[#2d3e57]" />
          <div className="pointer-events-none absolute top-[171px] left-[4px] h-[72px] w-[807px] border-12 border-[#2d3e57]" />
        </div>
      </div>
    </section>
  );
}

/* ---------- symbol selector ---------- */

const DataDefined = ({ name }: { name: string }) => (
  <div className="flex w-[73px] shrink-0 pl-4">
    <button aria-label={`Data defined override: ${name}`}>
      <Svg w={36} h={28} vb="0 0 36 28">
        <path d="M8 4v18C3 20 1 17 1 13s2-7 7-9Z" fill="#8f8f8f" />
        <path d="M9 2h19v24H9Z" fill="#fff" stroke="#85857f" strokeWidth="2" />
        <path d="M9 13h19" stroke="#85857f" strokeWidth="2" />
        <path d="M12 8h12" stroke="#555" strokeWidth="3" />
        <path d="M12 19h12" stroke="#555" strokeWidth="2" />
        <path d="M21 17h14l-7 8Z" fill="#000" />
      </Svg>
    </button>
  </div>
);

function Row({ name, htmlFor, h = "h-[50px]", children }: Kids & { name: string; htmlFor?: string; h?: string }) {
  return (
    <div className={`flex items-center pl-4 ${h}`}>
      <label htmlFor={htmlFor} className="w-[126px] shrink-0 whitespace-nowrap">{name}</label>
      <div className="flex flex-1 items-center">{children}</div>
      <DataDefined name={name || "Horizontal anchor"} />
    </div>
  );
}

const F = { fill: "#c8c8c8", stroke: "#444", strokeWidth: 1.5 };
const markers: React.ReactNode[] = [
  <path d="M-14-14h28v28h-28Z" {...F} />,
  <path d="M0-14 14 0 0 14-14 0Z" {...F} />,
  <path d="M0-14 14-4 9 12H-9L-14-4Z" {...F} />,
  <path d="M0-14 13-7V7L0 14-13 7V-7Z" {...F} />,
  <path d="M0-14 14 14h-28Z" {...F} />,
  <path d="M0-13 13 8h-26Z" {...F} />,
  <path d="M0-14 3-4H14L6 2 9 13 0 6-9 13-6 2-14-4H-3Z" {...F} />,
  <path d="M0-14 7-7H4V14H-4V-7H-7Z" {...F} />,
  <circle r="14" {...F} />,
  <path d="M0-14V14M-14 0H14" stroke="#000" strokeWidth="1.500" />,
  <path d="M-3-14H3V-3H14V3H3V14H-3V3H-14V-3H-3Z" fill="#8fb2da" stroke="#2f5680" strokeWidth="2" />,
  <path d="M-14-14 14 14M14-14-14 14" stroke="#555" strokeWidth="1.500" />,
  <path d="M0-14V14" stroke="#000" strokeWidth="1.500" />,
  <path d="M-14-14 0 0-14 14" stroke="#555" strokeWidth="1.800" />,
  <path d="M-14-14 0 0-14 14Z" {...F} />,
  <path d="M-14 0A14 14 0 0 1 14 0Z" {...F} />,
  <path d="M0 0V-14A14 14 0 0 0-12 7Z" {...F} />,
  <path d="M0 0V-14A14 14 0 0 0-14 0Z" {...F} />,
  <path d="M-14-14H0V0H-14Z" {...F} />,
  <path d="M-14-14H0V14H-14Z" {...F} />,
  <path d="M-14-14 14 14H-14Z" {...F} />,
  <path d="M0-14V14H-14Z" {...F} />,
  <path d="M0-14 14 14H0Z" {...F} />,
];

const dropBtn = "flex h-[34px] w-6 shrink-0 items-center justify-center rounded-[4px] border-2 border-[#858585] bg-[#f4f4f4]";

function SymbolSelector() {
  return (
    <section
      aria-label="Symbol selector"
      className="absolute top-[52px] left-[1448px] w-[1260px] border-12 border-[#2d3e57] bg-[#c9cbcd] pt-[3px] pr-2 pb-1 shadow-[0_10px_26px_rgba(0,0,0,0.2)]"
    >
      <div className="border border-[#1883d7] bg-[#efefef]">
        <header className="flex h-[57px] items-center bg-white pr-[35px] pl-[14px] text-[22px] [font-family:'Open_Sans','Noto_Sans',sans-serif]">
          <QLogo size={28} />
          <h2 className="mr-auto ml-2">Symbol selector</h2>
          <button className="mr-[70px] font-semibold">?</button>
          <button aria-label="Close"><Svg w={20} h={20} vb="0 0 20 20"><path d="M1 1 19 19M19 1 1 19" stroke="#222" strokeWidth="2" /></Svg></button>
        </header>
        <div className="flex flex-col pr-[17px] pb-4 pl-4">
          <div className="mt-[17px] flex">
            <div className="h-[154px] w-[591px] shrink-0 rounded-[3px] border-[3px] border-[#bcbcbc] bg-white text-[22px] [font-family:'Open_Sans','Noto_Sans',sans-serif]">
              <div className="flex h-[31px] items-center pl-[6px]">
                <Expander open />
                <span className="ml-[10px] flex"><Plus color="#2a18f0" /></span>
                <span className="ml-[13px] font-bold">Marker</span>
              </div>
              <div className="flex h-[31px] items-center bg-[#efefef] pl-[46px]">
                <Branch last />
                <span className="ml-2 flex"><Plus color="#3a44f0" /></span>
                <span className="ml-[13px]">Simple marker</span>
              </div>
            </div>
            <div className="flex flex-1 items-center justify-center pl-[10px]">
              <Svg w={154} h={154} vb="0 0 154 154">
                <path d="M77 0v154M0 77h154" stroke="#9a9a9a" strokeWidth="2" />
                <path d="M77 69v16M69 77h16" stroke="#2210f0" strokeWidth="3" />
              </Svg>
            </div>
          </div>
          <div className="mt-[14px] flex gap-[9px]">
            <Btn className="h-12 w-[54px]" label="Add symbol layer"><CrossGreen /></Btn>
            <Btn className="h-12 w-[54px] border-[#9a9a9a]" label="Remove symbol layer"><MinusBar c="#a8a8a8" f="#ebebeb" /></Btn>
            <Btn className="h-12 w-[54px]" label="Lock colour">
              <Svg w={28} h={32} vb="0 0 28 32">
                <path d="M9 8c0-8 13-8 13 1v6" stroke="#888" strokeWidth="4" /><path d="M9 8c0-8 13-8 13 1v6" stroke="#ddd" strokeWidth="1.500" />
                <rect x="2" y="15" width="23" height="16" fill="#f2dc1e" stroke="#b8960c" strokeWidth="2" />
              </Svg>
            </Btn>
            <Btn className="h-12 w-[54px]" label="Duplicate">
              <Svg w={30} h={32} vb="0 0 30 32">
                <path d="M2 6v24h24" stroke="#777" strokeWidth="4" /><path d="M6 2h22v24H6Z" fill="#f2f2f2" stroke="#888" strokeWidth="2" />
                <rect x="17" y="17" width="12" height="13" rx="3" fill="#c9a40d" /><circle cx="23" cy="23" r="4" fill="#f8eeb4" />
              </Svg>
            </Btn>
            <Btn className="h-12 w-[54px] border-[#9a9a9a]" label="Move up"><Svg w={30} h={24} vb="0 0 30 24"><path d="M15 2 28 22H2Z" fill="#b5b5b5" stroke="#858585" strokeWidth="2" /></Svg></Btn>
            <Btn className="h-12 w-[54px] border-[#9a9a9a]" label="Move down"><Svg w={30} h={24} vb="0 0 30 24"><path d="M15 22 28 2H2Z" fill="#b5b5b5" stroke="#858585" strokeWidth="2" /></Svg></Btn>
          </div>
          <hr className="mt-[13px] h-[3px] border-0 bg-[#a0a0a0]" />
          <div className="mt-[14px] flex items-center justify-between">
            <label htmlFor="slt">Symbol layer type</label>
            <Combo id="slt" label="Symbol layer type" value="Simple marker" className="mr-[2px] h-[34px] w-[590px]" />
          </div>
          <div className="mt-[13px]">
            <Row name="Fill" htmlFor="fill">
              <button id="fill" className="h-[34px] flex-1 rounded-[4px] border-2 border-[#858585] bg-[#f4f4f4] p-1">
                <span className="block h-full rounded-[4px] bg-[#2210f0]" />
              </button>
              <button aria-label="Fill menu" className={dropBtn}><Caret w={13} /></button>
            </Row>
            <Row name="Outline" htmlFor="outl">
              <button id="outl" className="h-[34px] flex-1 rounded-[4px] border-2 border-[#858585] bg-[#f4f4f4] px-[5px] py-[3px]">
                <span className="block h-full rounded-[4px] bg-[conic-gradient(#fff_25%,#cbcbcb_0_50%,#fff_0_75%,#cbcbcb_0)] bg-[length:12px_12px]" />
              </button>
              <button aria-label="Outline menu" className={dropBtn}><Caret w={13} /></button>
            </Row>
            <Row name="Size" htmlFor="size">
              <Spin id="size" label="Size" value="2.000000" className="flex-1" />
              <Combo label="Size unit" value="Millimeter" className="ml-[10px] h-[34px] w-[130px]" />
            </Row>
            <Row name="Outline style" htmlFor="ostyle">
              <Combo id="ostyle" label="Outline style" value="Solid Line" pad="pl-[60px]" className="h-[34px] flex-1" icon={<span className="h-[3px] w-12 bg-black" />} />
            </Row>
            <Row name="Join style" htmlFor="jstyle" h="h-[51px]">
              <Combo
                id="jstyle"
                label="Join style"
                value="Bevel"
                pad="pl-[42px]"
                className="h-10 flex-1"
                icon={
                  <Svg w={30} h={24} vb="0 0 30 24">
                    <path d="M4 20 12 8h6l8 12" stroke="#1e2c40" strokeWidth="9" /><path d="M4 20 12 8h6l8 12" stroke="#6d90b8" strokeWidth="6" />
                    <path d="M4 20 12 8h6l8 12" stroke="#e6dc5a" strokeWidth="1.500" strokeDasharray="2 2" />
                  </Svg>
                }
              />
            </Row>
            <Row name="Outline width" htmlFor="owidth" h="h-[51px]">
              <Spin id="owidth" label="Outline width" value="Hairline" className="flex-1" />
              <Combo label="Outline width unit" value="Millimeter" className="ml-[10px] h-[34px] w-[130px]" />
            </Row>
            <Row name="Rotation" htmlFor="mrot" h="h-[51px]">
              <Spin id="mrot" label="Rotation" value="0.00 º" className="flex-1" />
            </Row>
            <Row name="Offset X,Y" htmlFor="offx" h="h-[88px]">
              <div className="flex flex-1 flex-col gap-[9px]">
                <Spin id="offx" label="Offset X" value="0.000000" />
                <Spin label="Offset Y" value="0.000000" />
              </div>
              <Combo label="Offset unit" value="Millimeter" className="ml-[10px] h-[34px] w-[130px]" />
            </Row>
            <Row name="Anchor point" htmlFor="vanchor">
              <Combo id="vanchor" label="Vertical anchor" value="VCenter" className="h-[34px] flex-1" />
            </Row>
            <Row name="">
              <Combo label="Horizontal anchor" value="HCenter" className="h-[34px] flex-1" />
            </Row>
            <div className="mt-[6px] flex items-center pl-4">
              <div className="h-[298px] flex-1 rounded-[3px] border-[3px] border-[#c6c6c6] bg-white">
                <div className="flex w-[1063px] pt-[2px]">
                  {markers.map((m, i) => (
                    <button key={i} aria-label={`Marker shape ${i + 1}`} className="flex flex-1 justify-center">
                      <Svg w={30} h={30} vb="-15 -15 30 30">{m}</Svg>
                    </button>
                  ))}
                </div>
              </div>
              <DataDefined name="Shape" />
            </div>
          </div>
          <div className="mt-[19px] flex h-11 items-center">
            <Check id="sdeff" />
            <label htmlFor="sdeff" className="ml-[10px]">Draw effects</label>
            <Btn className="ml-auto h-11 w-[47px] border-[#858585]" label="Customize effects">
              <Svg w={30} h={30} vb="0 0 30 30">
                <path d="M14 2l3 9h9l-7 6 3 10-8-6-8 6 3-10-7-6h9Z" fill="#d6d6d6" stroke="#a5a5a5" strokeWidth="1.500" />
                <path d="m20 28 6-12 3 1" stroke="#666" strokeWidth="2" />
              </Svg>
            </Btn>
          </div>
          <Btn className="mt-[19px] ml-auto h-[43px] w-[143px] border-[#7a7a7a]">OK</Btn>
        </div>
      </div>
    </section>
  );
}

/* ---------- task bar ---------- */

const Adobe = ({ t, cls }: { t: string; cls: string }) => (
  <span className={`flex h-[42px] w-[44px] items-center justify-center border-[3px] text-[21px] leading-none font-semibold [font-family:'Open_Sans','Noto_Sans',sans-serif] ${cls}`}>{t}</span>
);

const apps: { name: string; open?: boolean; active?: boolean; art: React.ReactNode }[] = [
  { name: "TeamViewer", art: <Svg w={46} h={46} vb="0 0 46 46"><rect width="46" height="46" rx="3" fill="#0c72d6" /><circle cx="23" cy="23" r="19" fill="#fff" /><path d="M7 23l9-7v4h14v-4l9 7-9 7v-4H16v4Z" fill="#1a78d8" /></Svg> },
  { name: "WhatsApp", open: true, art: <span className="relative flex size-[46px] items-center justify-center"><Svg w={44} h={44} vb="0 0 44 44"><path d="M3 41 6 31A19 19 0 1 1 14 39Z" fill="#2cb742" stroke="#f4f4f4" strokeWidth="3" /></Svg><span className="absolute inset-0 flex items-center justify-center text-[30px] text-white"><FaWhatsapp /></span><span className="absolute -right-[3px] -bottom-1 flex h-[30px] w-[30px] items-center justify-center rounded-full bg-[#f90505] text-[22px] text-white">1</span></span> },
  { name: "File Explorer", open: true, art: <Svg w={44} h={40} vb="0 0 44 40"><path d="M1 2h16l3 4h22v30H1Z" fill="#ffe28f" /><path d="M1 2h16v6H1Z" fill="#f8c63c" /><path d="M3 4h5v4H3Z" fill="#3eb6e8" /><path d="M8 39V20h27v19h-8V29H16v10Z" fill="#3eb3e6" /></Svg> },
  { name: "Terminal", art: <Svg w={44} h={34} vb="0 0 44 34"><rect x="1" y="1" width="42" height="32" fill="#3a3d40" stroke="#a9acb0" strokeWidth="2" /><path d="M2 2h40v5H2Z" fill="#b9bcc0" /><path d="m8 12 4 3-4 3M15 19h8" stroke="#ccc" strokeWidth="1.500" /></Svg> },
  { name: "Rhinoceros", art: <Svg w={46} h={46} vb="0 0 46 46"><rect width="46" height="46" fill="#222" /><path d="M0 2c10 0 14 6 20 9 8-2 14-9 22-7 3 4 0 12 3 22-2 8-8 13-10 18-6 0-10-3-14-9-3-5-4-9-9-13C6 18 3 10 0 2Z" fill="#e9e9e9" /><path d="M5 5c6 3 9 10 12 14l8-5 10-6M24 24c2 6 6 8 10 12M38 10c-2 8 0 14 2 18" stroke="#555" strokeWidth="2" /><circle cx="22" cy="25" r="2" fill="#e33" /></Svg> },
  { name: "Grasshopper", art: <Svg w={46} h={46} vb="0 0 46 46"><path d="M0 0h46v46H0Z" fill="#8c8c8c" /><path d="M0 0h20l4 14L0 20Z" fill="#a6a6a6" /><path d="M20 0h12l-6 10-4-2Z" fill="#222" /><path d="M4 44c0-13 8-18 19-18s19 5 19 18Z" fill="#93bd3b" /><path d="m9 23 5 8M37 23l-5 8" stroke="#93bd3b" strokeWidth="3" /><circle cx="15" cy="37" r="3" fill="#fff" /><circle cx="31" cy="37" r="3" fill="#fff" /></Svg> },
  { name: "QGIS", art: <QLogo size={42} /> },
  { name: "InDesign", art: <Adobe t="Id" cls="border-[#d6308c] bg-[#2c0818] text-[#f050a8]" /> },
  { name: "Photoshop", art: <Adobe t="Ps" cls="border-[#6cacee] bg-[#06094a] text-[#7ab8f5]" /> },
  { name: "Illustrator", open: true, art: <Adobe t="Ai" cls="border-[#f29d25] bg-[#281a04] text-[#f8ab3c]" /> },
  { name: "Shapes", art: <Svg w={42} h={42} vb="0 0 42 42"><g fill="#2c2e30" stroke="#8f8f8f" strokeWidth="2"><circle cx="12" cy="16" r="10" /><circle cx="30" cy="16" r="10" /><circle cx="12" cy="27" r="10" /><circle cx="30" cy="27" r="10" /></g><path d="M8 10h26v22H8Z" fill="#2c2e30" /><path d="M14 14c-6 4-2 12 7 8s12 3 7 8M28 13c-3 4-8 3-12 9s-4 6-2 9" stroke="#ddd" strokeWidth="2" /><circle cx="21" cy="6" r="6" fill="#d32a2a" stroke="#aaa" /><circle cx="21" cy="36" r="6" fill="#d32a2a" stroke="#aaa" /></Svg> },
  { name: "Blender", art: <span className="relative flex text-[42px] text-[#f5812a]"><span className="absolute top-[13px] left-[16px] size-[20px] rounded-full bg-white" /><span className="absolute top-[17px] left-[20px] size-[12px] rounded-full bg-[#1d5a9c]" /><span className="relative"><SiBlender /></span></span> },
  { name: "Atom", art: <Svg w={46} h={46} vb="0 0 46 46"><circle cx="23" cy="23" r="22" fill="#55b982" /><circle cx="23" cy="23" r="22" stroke="#8fd8a6" strokeWidth="2" /><g stroke="#e8f8ee" strokeWidth="1.500"><ellipse cx="23" cy="23" rx="5" ry="14" /><ellipse cx="23" cy="23" rx="5" ry="14" transform="rotate(60 23 23)" /><ellipse cx="23" cy="23" rx="5" ry="14" transform="rotate(120 23 23)" /></g><circle cx="23" cy="23" r="2" fill="#fff" /></Svg> },
  { name: "Paint brush", art: <Svg w={46} h={46} vb="0 0 46 46"><path d="M18 30 36 3c5-4 7 0 6 6L28 32Z" fill="#b9b9b9" /><path d="M5 30c4 14 28 17 36 0" stroke="#5b9c30" strokeWidth="3" /><path d="M9 34c0-14 12-22 22-17 5 10-4 22-22 17Z" fill="#b85648" /><path d="m3 45 8-7" stroke="#888" strokeWidth="4" /></Svg> },
  { name: "Chrome", open: true, art: <Svg w={44} h={44} vb="0 0 44 44"><circle cx="22" cy="22" r="21" fill="#fccc34" /><path d="M22 22 4 11.500A21 21 0 0 1 40.500 12H22Z" fill="#dc4437" /><path d="M22 22v21A21 21 0 0 1 4 11.500L13 27Z" fill="#109d58" /><path d="m30 27-9 16" stroke="#109d58" strokeWidth="2" /><circle cx="22" cy="22" r="10" fill="#f4f4f4" /><circle cx="22" cy="22" r="8" fill="#4587f3" /></Svg> },
  { name: "Spotify", art: <span className="text-[43px] text-[#1ed760]"><FaSpotify /></span> },
  { name: "Notes", open: true, art: <Svg w={36} h={36} vb="0 0 36 36"><path d="M1 1h34v17L18 35H1Z" fill="#fff" /><path d="M35 18v17H18V21l17-3Z" fill="#1b140f" /><path d="M35 20v15H21Z" fill="#fff" /></Svg> },
  { name: "QGIS Desktop", open: true, active: true, art: <QLogo size={42} /> },
];

function TaskBar() {
  return (
    <div className="flex h-[77px] bg-[#1e1610] text-white [font-family:'Open_Sans','Noto_Sans',sans-serif]">
      <button aria-label="Start" className="flex w-[94px] items-center justify-center text-[32px]"><FaWindows /></button>
      <button aria-label="Task view" className="flex w-[94px] items-center justify-center">
        <Svg w={32} h={30} vb="0 0 32 30">
          <path d="M1 9h18v12H1ZM1 1v4h18V1M1 29v-4h18v4M28 1v28" stroke="#fff" strokeWidth="2" /><path d="M25 10h6v5h-6Z" fill="#fff" />
        </Svg>
      </button>
      <div className="flex w-[1718px]">
        {apps.map((a) => (
          <button
            key={a.name}
            aria-label={a.name}
            className={`relative flex flex-1 items-center justify-center ${a.active ? "bg-[#4b4540]" : ""}`}
          >
            {a.art}
            {a.open && <span className={`absolute bottom-0 h-[5px] bg-[#76b9ed] ${a.active ? "inset-x-0" : "inset-x-2"}`} />}
          </button>
        ))}
      </div>
      <div className="ml-auto flex items-center pr-[6px] text-[22px]">
        <Svg w={32} h={32} vb="0 0 32 32" className="mr-10">
          <g stroke="#fff" strokeWidth="2.200"><circle cx="20" cy="7" r="5" /><path d="M12 18c2-7 16-8 18 3" /><circle cx="10" cy="17" r="5" /><path d="M2 31c1-11 15-11 16 0" /></g>
        </Svg>
        <Svg w={24} h={14} vb="0 0 24 14" className="mr-5"><path d="m1 13 11-11 11 11" stroke="#fff" strokeWidth="2" /></Svg>
        <Svg w={32} h={24} vb="0 0 32 24" className="mr-[14px]"><path d="M10 4h20v16H6V12" stroke="#fff" strokeWidth="2" /><path d="M12 7h6v10h-6Z" fill="#fff" /><path d="M2 1v5h7V1M5 6v6" stroke="#fff" strokeWidth="2" /></Svg>
        <Svg w={34} h={28} vb="0 0 34 28" className="mr-4"><path d="M6 20c-6-2-6-11 2-11 2-8 14-9 17-1 6 1 7 8 3 11Z" fill="#fff" /><circle cx="22" cy="19" r="8" fill="#2b6cd8" stroke="#fff" strokeWidth="1.500" /><path d="M17 18h10M17 21h10" stroke="#fff" strokeWidth="1.500" /></Svg>
        <Svg w={28} h={26} vb="0 0 28 26" className="mr-[14px]"><path d="M2 24C2 11 12 2 26 2M8 24c0-9 7-16 18-16M14 24c0-6 5-10 12-10M20 24c0-3 2-5 6-5" stroke="#fff" strokeWidth="2" /></Svg>
        <Svg w={30} h={26} vb="0 0 30 26" className="mr-6"><path d="M2 9h4l6-6v20l-6-6H2Z" stroke="#fff" strokeWidth="2" /><path d="M16 9c2 2 2 6 0 8M20 6c4 4 4 10 0 14M24 3c6 6 6 14 0 20" stroke="#ddd" strokeWidth="2" /></Svg>
        <span className="mr-7">CAT</span>
        <div className="flex flex-col text-center leading-[35px]"><span>12:43</span><span>02/07/2018</span></div>
        <button aria-label="Notifications" className="relative mr-5 ml-[34px]">
          <Svg w={46} h={46} vb="0 0 46 46">
            <path d="M1 4h30v24H17l-6 6v-6H1Z" fill="#fff" /><path d="M6 10h20M6 16h20M6 22h12" stroke="#1e1610" strokeWidth="2" />
            <circle cx="31" cy="30" r="14" fill="#333" stroke="#999" />
          </Svg>
          <span className="absolute right-0 bottom-[2px] flex w-[30px] justify-center text-[20px] leading-7">2</span>
        </button>
        <span className="h-[77px] w-px bg-[#6a645e]" />
      </div>
    </div>
  );
}

function Desktop() {
  return (
    <main className="relative mt-[169px] text-[19px] text-black [font-family:'DejaVu_Sans_Condensed','Noto_Sans',sans-serif]">
      <div className="bg-[#efefef]">
        <header className="flex h-[45px] items-center bg-white pr-9 pb-[3px] pl-1 text-[22px] text-[#9a9a9a] [font-family:'Open_Sans','Noto_Sans',sans-serif]">
          <QLogo size={30} />
          <h1 className="mr-auto ml-2">QGIS 2.18.13</h1>
          <button aria-label="Minimize" className="mr-[68px]"><Svg w={20} h={20} vb="0 0 20 20"><path d="M0 10h20" stroke="#8a8a8a" strokeWidth="2" /></Svg></button>
          <button aria-label="Restore" className="mr-[70px]"><Svg w={20} h={20} vb="0 0 22 22"><path d="M2 6h14v14H2ZM6 6V2h14v14h-4" stroke="#8a8a8a" strokeWidth="2" /></Svg></button>
          <button aria-label="Close" className="mr-[3px]"><Svg w={20} h={20} vb="0 0 22 22"><path d="m1 1 20 20M21 1 1 21" stroke="#8a8a8a" strokeWidth="2" /></Svg></button>
        </header>
        <nav className="flex h-10 items-center gap-[25px] border-b-[3px] border-[#bcbcbc] pl-4">
          {["Project", "Edit", "View", "Layer", "Settings"].map((m) => (
            <button key={m}>{m}</button>
          ))}
        </nav>
        <MainToolbars />
        <div className="flex h-[1326px]">
          <SideTools />
          <div className="flex w-[508px] shrink-0 flex-col overflow-hidden">
            <BookmarksPanel />
            <LayersPanel />
          </div>
          <div className="relative ml-[10px] flex-1 border-2 border-b-[3px] border-[#bcbcbc] bg-white">
            <svg viewBox="0 0 430 104" className="absolute bottom-7 left-[1118px] h-[104px] w-[430px]" aria-hidden="true">
              <path d="M3 20 22 42 23 56 36 59 49 60 71 60 80 68 89 63 102 60 111 54 117 46 130 46 147 51 155 44 182 20Z" fill="#2b20d0" stroke="#2a2a60" />
              <path d="M182 34 196 20H182Z" fill="#cbcb74" stroke="#77773c" />
              <path d="M218 20 237 44 257 63 273 73 279 69 300 77 308 84 318 92 336 97 355 101 385 99 413 95 418 91 408 86 396 86 393 70 397 54 408 38 420 20Z" fill="#cbcb74" stroke="#77773c" />
            </svg>
          </div>
        </div>
        <StatusBar />
        <TaskBar />
      </div>
      <LayerProperties />
      <SymbolSelector />
      <svg width="534" height="244" viewBox="0 0 534 244" fill="none" className="pointer-events-none absolute -top-6 left-[1246px]" aria-hidden="true">
        <path d="M6 244V6H508V78" stroke="#2d3e57" strokeWidth="12" />
        <path d="M486 43 508 70 530 43V61L508 86 486 61Z" fill="#2d3e57" />
      </svg>
    </main>
  );
}

export default function App() {
  return (
    <div className="min-h-screen w-full border-2 border-[#2d3e57] bg-white px-[276px] pt-[102px]">
      <h1 className="flex h-[138px] w-fit items-center bg-[#00ffff] pr-16 pb-1 pl-10 text-[97px] leading-none font-bold whitespace-pre text-[#2d3e57] italic [font-family:'Noto_Sans',sans-serif]">
        {"propiedades:  símbolo según categoría"}
      </h1>
      <Desktop />
    </div>
  );
}
